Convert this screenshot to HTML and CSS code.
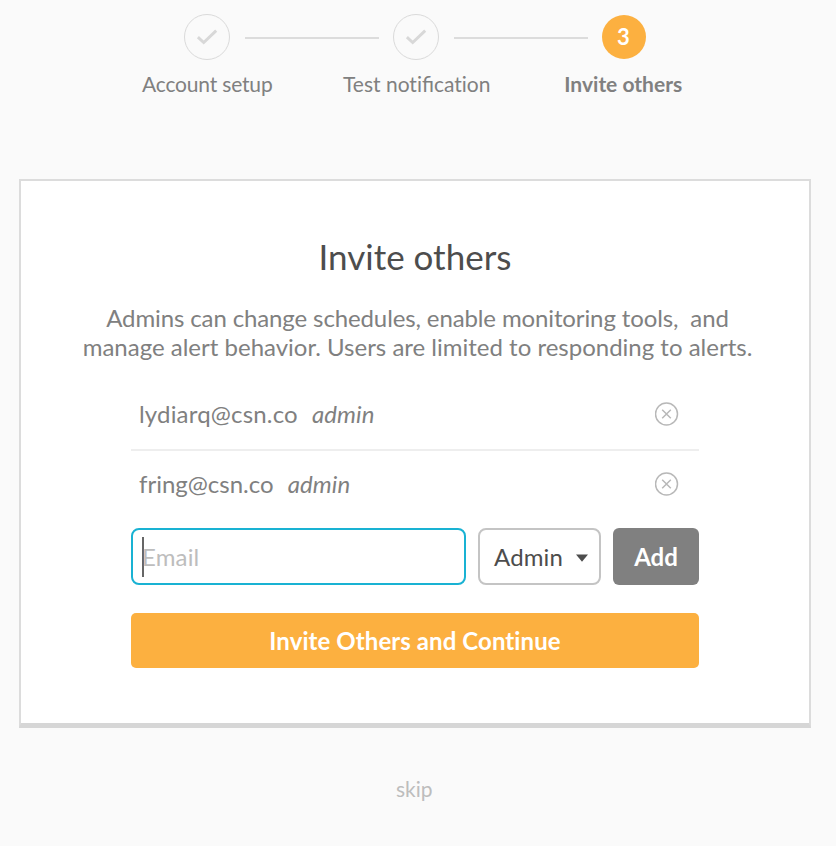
FILE: index.html
```html
<!DOCTYPE html>
<html lang="en">
<head>
<meta charset="utf-8">
<title>Invite others</title>
<link rel="stylesheet" href="styles.css">
</head>
<body>
<nav class="progress">
  <div class="track">
    <span class="dot"><svg width="22" height="16" viewBox="0 0 22 16"><path d="M1.9 8.1 L7.7 13.5 L20.2 1.6"/></svg></span>
    <span class="line"></span>
    <span class="dot"><svg width="22" height="16" viewBox="0 0 22 16"><path d="M1.9 8.1 L7.7 13.5 L20.2 1.6"/></svg></span>
    <span class="line"></span>
    <span class="dot current">3</span>
  </div>
  <div class="labels">
    <span class="label first">Account setup</span>
    <span class="label second">Test noti<span class="ligature">fi</span>cation</span>
    <span class="label active">Invite others</span>
  </div>
</nav>
<main class="card">
  <h1 class="title">Invite others</h1>
  <p class="intro"><span class="lead">Admins can change schedules, enable monitoring tools,&nbsp; and</span><br>manage alert behavior. Users are limited to responding to alerts.</p>
  <ul class="people">
    <li class="person"><span class="email wide">lydiarq@csn.co</span><em class="role">admin</em>
      <svg class="remove" width="24" height="24" viewBox="0 0 24 24"><circle cx="11.5" cy="12" r="11"/><path d="M7.2 7.7 L15.8 16.3 M15.8 7.7 L7.2 16.3"/></svg></li>
    <li class="person"><span class="email">fring@csn.co</span><em class="role">admin</em>
      <svg class="remove" width="24" height="24" viewBox="0 0 24 24"><circle cx="11.5" cy="12" r="11"/><path d="M7.2 7.7 L15.8 16.3 M15.8 7.7 L7.2 16.3"/></svg></li>
  </ul>
  <div class="form">
    <div class="field"><span class="caret"></span><span class="placeholder">Email</span></div>
    <div class="select"><span>Admin</span><svg width="12" height="8" viewBox="0 0 12 8"><path d="M0 .6H12L6 7.8Z"/></svg></div>
    <div class="add">Add</div>
  </div>
  <div class="submit">Invite Others and Continue</div>
</main>
<div class="skip">skip</div>
</body>
</html>
```
FILE: styles.css
```css
* { box-sizing: border-box; }
body {
  margin: 0;
  width: 836px;
  height: 846px;
  overflow: hidden;
  background: #fafafa;
  color: #808080;
  font-family: Lato, "Liberation Sans", sans-serif;
  font-size: 24px;
  font-variant-ligatures: none;
}
.progress { padding-top: 14px; height: 179px; }
.track { display: flex; align-items: center; height: 46px; margin-left: 183.5px; }
.dot {
  width: 46px;
  height: 46px;
  border: 1.5px solid #dadada;
  border-radius: 50%;
  display: flex;
  align-items: center;
  justify-content: center;
}
.dot svg { fill: none; stroke: #d8d8d8; stroke-width: 2.9; }
.dot.current {
  width: 44px;
  height: 44px;
  border: 0;
  background: #fcb040;
  color: #fff;
  font-size: 22px;
  font-weight: 700;
  padding-bottom: 2px;
}
.line { width: 134px; height: 2px; background: #dcdcdc; margin: 2px 14px 0 15px; }
.labels {
  display: grid;
  grid-template-columns: repeat(3, 208.5px);
  margin: 8px 0 0 103px;
  text-align: center;
  font-size: 21px;
  line-height: 32px;
}
.label { white-space: nowrap; }
.first { letter-spacing: -.18px; }
.second { margin-left: 2px; }
.ligature { font-variant-ligatures: common-ligatures; }
.active { font-weight: 700; margin-left: -2px; }
.card {
  margin-left: 19px;
  width: 792px;
  height: 549px;
  padding: 53px 110px 0;
  background: #fff;
  border: 2px solid #dcdcdc;
  border-bottom: 5px solid #d6d6d6;
}
.title {
  margin: 0;
  text-align: center;
  color: #4d4d4d;
  font-size: 35px;
  font-weight: 400;
  line-height: 44px;
}
.intro {
  margin: 24.5px -60px 0 -55px;
  text-align: center;
  white-space: nowrap;
  line-height: 29.5px;
}
.lead { letter-spacing: -.12px; }
.people { list-style: none; margin: 17px 0 0; padding: 0; }
.person { display: flex; align-items: center; height: 66px; padding: 0 20px 0 8px; }
.person:first-child { height: 72px; border-bottom: 2px solid #eee; }
.email, .role { margin-top: -1px; }
.wide { letter-spacing: .18px; }
.role { margin-left: 14px; letter-spacing: .1px; }
.remove { margin-left: auto; fill: none; stroke: #b8b8b8; stroke-width: 1.5; }
.form { display: flex; margin-top: 11px; height: 57px; }
.field {
  display: flex;
  align-items: center;
  width: 335px;
  border: 2px solid #19b2d3;
  border-radius: 8px;
  padding-left: 9px;
  margin-right: 12px;
  color: #bdbdbd;
}
.caret { width: 2px; height: 40px; background: #666; margin: 2px -2px 0 0; }
.placeholder { letter-spacing: .15px; }
.select {
  display: flex;
  align-items: center;
  justify-content: space-between;
  width: 123px;
  border: 2px solid #c4c4c4;
  border-radius: 8px;
  padding: 0 11px 0 14px;
  color: #4d4d4d;
  letter-spacing: .15px;
}
.select svg { fill: #4d4d4d; margin-top: 4px; }
.add {
  display: flex;
  align-items: center;
  justify-content: center;
  width: 86px;
  margin-left: auto;
  border-radius: 6px;
  background: #808080;
  color: #fff;
  font-weight: 700;
}
.submit {
  margin-top: 28px;
  height: 55px;
  border-radius: 5px;
  background: #fcb040;
  color: #fff;
  font-weight: 700;
  letter-spacing: .08px;
  line-height: 55px;
  text-align: center;
}
.skip { margin-top: 46px; margin-left: 396px; font-size: 21px; line-height: 30px; color: #bdbdbd; }
```
